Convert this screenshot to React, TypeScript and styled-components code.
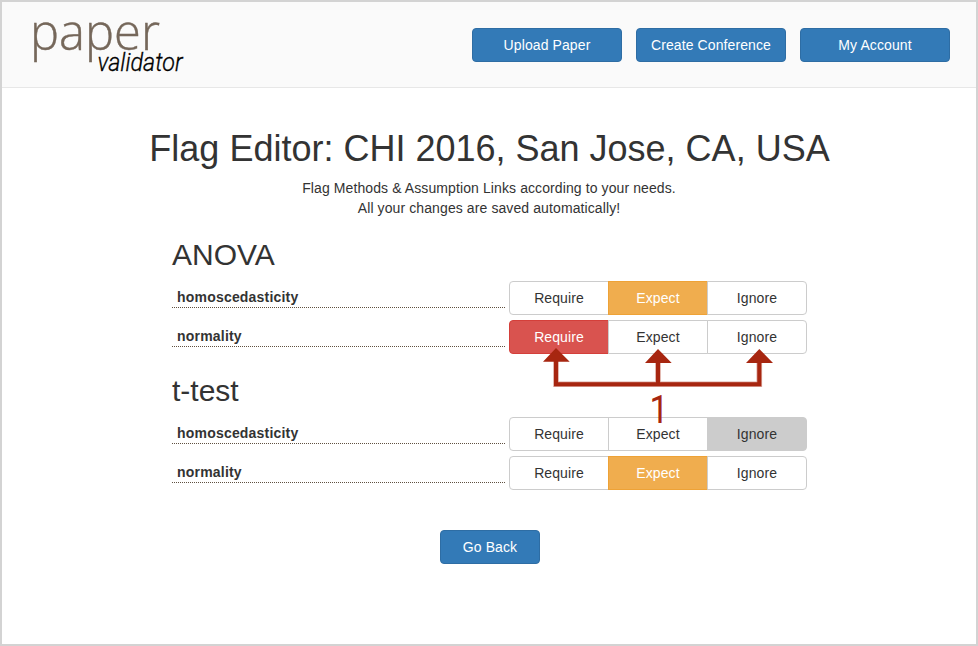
import React, { useState } from 'react';
import styled, { createGlobalStyle, css } from 'styled-components';

const GlobalStyle = createGlobalStyle`
  *, *::before, *::after { box-sizing: border-box; }
  body {
    margin: 0;
    background: #fff;
    color: #333;
    font: 14px/20px "Liberation Sans", Arial, sans-serif;
  }
`;

const Page = styled.div`
  height: 646px;
  border: 2px solid #d3d3d3;
  overflow: hidden;
`;

const Header = styled.header`
  display: flex;
  justify-content: space-between;
  height: 86px;
  padding-right: 26px;
  background: #fafafa;
  border-bottom: 1px solid #e7e7e7;
`;

const Logo = styled.svg`
  display: block;
  width: 200px;
  height: 84px;
`;

const Nav = styled.nav`
  display: flex;
  gap: 14px;
  padding-top: 26px;
`;

const PrimaryButton = styled.button<{ $width: number }>`
  width: ${(p) => p.$width}px;
  height: 34px;
  padding: 0;
  border: 1px solid #2e6da4;
  border-radius: 4px;
  background: #337ab7;
  color: #fff;
  font: inherit;
  letter-spacing: 0.1px;
`;

const Main = styled.main`
  display: flex;
  flex-direction: column;
  width: 635px;
  margin: 41px 0 0 170px;
`;

const Title = styled.h1`
  align-self: center;
  margin: 0 0 9px;
  font-size: 36px;
  font-weight: 400;
  line-height: 40px;
  white-space: nowrap;
`;

const Intro = styled.p`
  margin: 0;
  padding-right: 1px;
  text-align: center;
  letter-spacing: 0.1px;
`;

const Section = styled.section`
  position: relative;
  display: flex;
  flex-direction: column;
  gap: 5px;
  margin-top: 20px;
`;

const SectionTitle = styled.h2`
  margin: 0 0 5px;
  font-size: 30px;
  font-weight: 400;
  line-height: 33px;
`;

const Row = styled.div`
  display: flex;
  gap: 4px;
  height: 34px;
`;

const Label = styled.div`
  width: 333px;
  height: 21px;
  margin-top: 6px;
  padding-left: 5px;
  border-bottom: 1px dotted #5f5040;
  font-weight: 700;
  letter-spacing: 0.2px;
`;

const Group = styled.div`
  display: flex;
`;

type Flag = 'Require' | 'Expect' | 'Ignore';

const activeColors = {
  Require: css`background: #d9534f; border-color: #d43f3a; color: #fff;`,
  Expect: css`background: #f0ad4e; border-color: #eea236; color: #fff;`,
  Ignore: css`background: #ccc; border-color: #ccc;`,
};

const Option = styled.button<{ $flag: Flag; $active: boolean }>`
  width: 100px;
  height: 34px;
  padding: 0;
  border: 1px solid #ccc;
  background: #fff;
  color: #333;
  font: inherit;
  letter-spacing: 0.1px;
  & + & { margin-left: -1px; }
  &:first-child { border-radius: 4px 0 0 4px; }
  &:last-child { border-radius: 0 4px 4px 0; }
  ${(p) => p.$active && activeColors[p.$flag]}
`;

const Annotation = styled.svg`
  position: absolute;
  left: 368px;
  top: 108px;
  width: 240px;
  height: 80px;
  overflow: visible;
  z-index: 1;
  pointer-events: none;
`;

const Footer = styled.div`
  display: flex;
  justify-content: center;
  margin-top: 40px;
  padding-left: 1px;
`;

const flags: Flag[] = ['Require', 'Expect', 'Ignore'];

function FlagRow({ name, initial }: { name: string; initial: Flag }) {
  const [value, setValue] = useState<Flag>(initial);
  return (
    <Row>
      <Label>{name}</Label>
      <Group>
        {flags.map((f) => (
          <Option key={f} $flag={f} $active={f === value} onClick={() => setValue(f)}>
            {f}
          </Option>
        ))}
      </Group>
    </Row>
  );
}

function Callout() {
  return (
    <Annotation viewBox="540 346 240 80">
      <path d="M556 360V384.3H759.3V360M658 360V384" fill="none" stroke="#a72610" strokeOpacity="0.4" strokeWidth="5.6" />
      <path d="M556 360V384.3H759.3V360M658 360V384" fill="none" stroke="#a72610" strokeWidth="4" />
      <path d="M556 348L569.7 361.7H543ZM658 349L671.7 363H645ZM759.3 349L773 363H746Z" fill="#a72610" />
      <text x="649.5" y="423" fontFamily="Roboto" fontSize="39" fill="#a72610" textLength="19" lengthAdjust="spacingAndGlyphs">1</text>
    </Annotation>
  );
}

export default function App() {
  return (
    <>
      <GlobalStyle />
      <Page>
        <Header>
          <Logo viewBox="2 2 200 84">
            <text x="30" y="50" fontFamily="Open Sans" fontWeight="300" fontSize="50" fill="#75675a" stroke="#75675a" strokeWidth="0.4" textLength="130" lengthAdjust="spacingAndGlyphs">paper</text>
            <text x="97.5" y="71.3" fontFamily="Roboto" fontWeight="300" fontStyle="italic" fontSize="25" fill="#000" stroke="#000" strokeWidth="0.3" textLength="85" lengthAdjust="spacingAndGlyphs">validator</text>
          </Logo>
          <Nav>
            <PrimaryButton $width={150}>Upload Paper</PrimaryButton>
            <PrimaryButton $width={150}>Create Conference</PrimaryButton>
            <PrimaryButton $width={150}>My Account</PrimaryButton>
          </Nav>
        </Header>
        <Main>
          <Title>Flag Editor: CHI 2016, San Jose, CA, USA</Title>
          <Intro>
            Flag Methods &amp; Assumption Links according to your needs.
            <br />
            All your changes are saved automatically!
          </Intro>
          <Section>
            <SectionTitle>ANOVA</SectionTitle>
            <FlagRow name="homoscedasticity" initial="Expect" />
            <FlagRow name="normality" initial="Require" />
            <Callout />
          </Section>
          <Section>
            <SectionTitle>t-test</SectionTitle>
            <FlagRow name="homoscedasticity" initial="Ignore" />
            <FlagRow name="normality" initial="Expect" />
          </Section>
          <Footer>
            <PrimaryButton $width={100}>Go Back</PrimaryButton>
          </Footer>
        </Main>
      </Page>
    </>
  );
}
